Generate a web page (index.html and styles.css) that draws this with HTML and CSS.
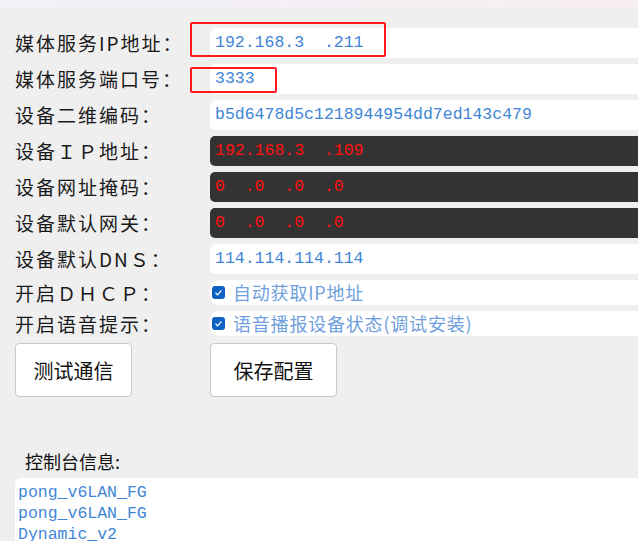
FILE: index.html
```html
<!DOCTYPE html>
<html lang="zh">

<head>
    <meta charset="UTF-8">
    <meta name="viewport" content="width=device-width, initial-scale=1.0">
    <title>设备配置</title>
    <link rel="stylesheet" href="styles.css">
</head>

<body>
    <div class="topbar"></div>
    <div class="config">
        <div class="row">
            <label>媒体服务IP地址：</label>
            <div class="field">192.168.3  .211</div>
        </div>
        <div class="row">
            <label>媒体服务端口号：</label>
            <div class="field">3333</div>
        </div>
        <div class="row">
            <label>设备二维编码：</label>
            <div class="field">b5d6478d5c1218944954dd7ed143c479</div>
        </div>
        <div class="row">
            <label>设备ＩＰ地址：</label>
            <div class="field dark">192.168.3  .109</div>
        </div>
        <div class="row">
            <label>设备网址掩码：</label>
            <div class="field dark">0  .0  .0  .0</div>
        </div>
        <div class="row">
            <label>设备默认网关：</label>
            <div class="field dark">0  .0  .0  .0</div>
        </div>
        <div class="row">
            <label>设备默认DNＳ：</label>
            <div class="field">114.114.114.114</div>
        </div>
        <div class="row small">
            <label>开启ＤＨＣＰ：</label>
            <div class="field check"><span class="box"><svg width="9" height="9" viewBox="0 0 9 9"><path d="M1.5 4.8 L3.6 6.8 L7.5 2.3" fill="none" stroke="#fff" stroke-width="1.2"/></svg></span>自动获取IP地址</div>
        </div>
        <div class="row small">
            <label>开启语音提示：</label>
            <div class="field check"><span class="box"><svg width="9" height="9" viewBox="0 0 9 9"><path d="M1.5 4.8 L3.6 6.8 L7.5 2.3" fill="none" stroke="#fff" stroke-width="1.2"/></svg></span>语音播报设备状态(调试安装)</div>
        </div>
        <div class="buttons">
            <button class="btn test">测试通信</button>
            <button class="btn save">保存配置</button>
        </div>

        <!-- red markers over the first two fields -->
        <div class="mark mark-ip"></div>
        <div class="mark mark-port"></div>
    </div>

    <p class="console-title">控制台信息:</p>
    <div class="console">
        <div>pong_v6LAN_FG</div>
        <div>pong_v6LAN_FG</div>
        <div>Dynamic_v2</div>
    </div>
</body>
</html>
```

FILE: styles.css
```css
* {
    margin: 0;
    padding: 0;
    box-sizing: border-box;
}

html,
body {
    overflow: hidden;
}

body {
    background-color: #efefef;
    font-family: "Noto Sans CJK SC", "Noto Sans", sans-serif;
    color: #1a1a1a;
    width: 638px;
    height: 541px;
}

.topbar {
    height: 8px;
    background: linear-gradient(90deg, #f1f1f6, #f7eef2);
}

.config {
    position: relative;
    width: 623px;
    margin-top: 20px;
    margin-left: 15px;
    display: flex;
    flex-direction: column;
    gap: 6px;
}

.row {
    display: flex;
    align-items: center;
    height: 30px;
    margin-right: -20px;
}

.row.small {
    height: 25px;
}

.row label {
    width: 195px;
    flex-shrink: 0;
    font-size: 19px;
    letter-spacing: 2px;
    line-height: 30px;
}

.field {
    flex: 1;
    height: 100%;
    background-color: #fff;
    border-radius: 5px;
    padding-left: 5px;
    font-family: "Liberation Mono", "DejaVu Sans Mono", monospace;
    font-size: 16.5px;
    line-height: 30px;
    color: #3f86d6;
    white-space: pre;
}

.field.dark {
    background-color: #333333;
    color: #ff1010;
}

.field.check {
    display: flex;
    align-items: center;
    gap: 8px;
    border-radius: 9px;
    padding-left: 2px;
    font-family: "Noto Sans CJK SC", sans-serif;
    font-size: 18px;
    letter-spacing: 0.8px;
    line-height: 25px;
    color: #6f9fdc;
}

.box {
    width: 13px;
    height: 13px;
    border-radius: 3px;
    background-color: #0b62c2;
    display: flex;
    align-items: center;
    justify-content: center;
}

.buttons {
    display: flex;
    margin-top: 1px;
}

.btn {
    height: 54px;
    background-color: #fff;
    border: 1px solid #c9c9c9;
    border-radius: 4px;
    font-family: "Noto Sans CJK SC", sans-serif;
    font-size: 20px;
    color: #111;
}

.btn.test {
    width: 117px;
    margin-right: 78px;
}

.btn.save {
    width: 127px;
}

.mark {
    position: absolute;
    border: 2px solid #ff1a1a;
    border-radius: 2px;
}

.mark-ip {
    left: 175px;
    top: -6px;
    width: 196px;
    height: 35px;
}

.mark-port {
    left: 175px;
    top: 39px;
    width: 87px;
    height: 26px;
}

.console-title {
    margin-top: 52px;
    margin-left: 25px;
    font-size: 18px;
    line-height: 24px;
    color: #111;
}

.console {
    margin-top: 5px;
    margin-left: 15px;
    height: 63px;
    background-color: #fff;
    border-top-left-radius: 6px;
    padding: 4px 0 0 3px;
    font-family: "Liberation Mono", "DejaVu Sans Mono", monospace;
    font-size: 16.5px;
    line-height: 21px;
    color: #3f86d6;
    overflow: hidden;
}
```
